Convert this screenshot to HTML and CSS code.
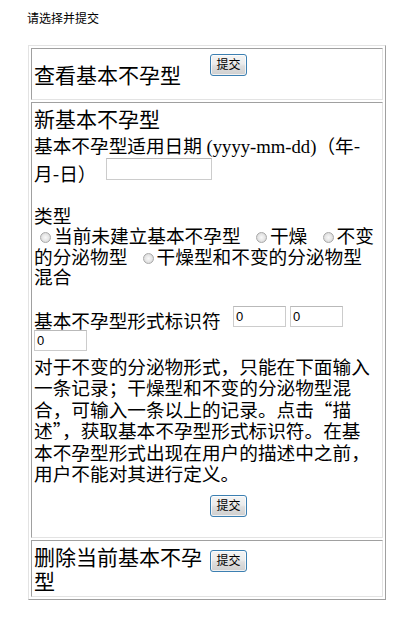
FILE: index.html
```html
<!DOCTYPE html>
<html lang="zh-CN">
<head>
<meta charset="utf-8">
<title>基本不孕型</title>
<link rel="stylesheet" href="styles.css">
</head>
<body>
<div class="page">
  <p class="caption">请选择并提交</p>
  <div class="panel">
    <form class="cell">
      <div class="row row-view">
        <span class="label">查看基本不孕型</span>
        <button type="button" class="btn">提交</button>
      </div>
    </form>
    <form class="cell cell-new">
      <div class="title">新基本不孕型</div>
      <div class="field field-date">基本不孕型适用日期<span class="latin">&nbsp;(yyyy-mm-dd)</span>（年-月-日）&ensp;<input class="txt txt-date" type="text"></div>
      <div class="group">
        <div>类型</div>
        <div class="choices"><label class="opt"><input type="radio" name="kind" class="radio">当前未建立基本不孕型</label>&ensp;<label class="opt"><input type="radio" name="kind" class="radio">干燥</label>&ensp;<label class="opt"><input type="radio" name="kind" class="radio">不变的分泌物型</label>&ensp;<label class="opt"><input type="radio" name="kind" class="radio">干燥型和不变的分泌物型混合</label></div>
      </div>
      <div class="field field-ids">基本不孕型形式标识符&ensp;<input class="txt txt-id" type="text" value="0"> <input class="txt txt-id" type="text" value="0"> <input class="txt txt-id" type="text" value="0"></div>
      <p class="note">对于不变的分泌物形式，只能在下面输入一条记录；干燥型和不变的分泌物型混合，可输入一条以上的记录。点击“描述”，获取基本不孕型形式标识符。在基本不孕型形式出现在用户的描述中之前，用户不能对其进行定义。</p>
      <div class="actions"><button type="button" class="btn">提交</button></div>
    </form>
    <form class="cell">
      <div class="row row-del">
        <span class="label">删除当前基本不孕型</span>
        <button type="button" class="btn">提交</button>
      </div>
    </form>
  </div>
</div>
</body>
</html>
```

FILE: styles.css
```css
* {
  box-sizing: border-box;
}

body {
  margin: 0;
  background: #ffffff;
  color: #000000;
  font-family: "Noto Sans CJK SC", sans-serif;
}

.page {
  padding: 10px 0 0 27px;
}

.caption {
  margin: 0;
  font-size: 12px;
  line-height: 16px;
}

.panel {
  width: 358px;
  margin: 19px 0 0 1px;
  padding: 2px;
  border: 1px solid;
  border-color: #e3e3e3 #a0a0a0 #a0a0a0 #e3e3e3;
  display: flex;
  flex-direction: column;
  gap: 2px;
}

.cell {
  margin: 0;
  padding: 0 6px 0 2px;
  border: 1px solid;
  border-color: #a0a0a0 #e3e3e3 #e3e3e3 #a0a0a0;
  font-size: 18.67px;
  line-height: 21.5px;
}

/* rows with a label column and a button column */
.row {
  display: flex;
  gap: 6px;
  align-items: flex-start;
}

.label {
  width: 170px;
  font-size: 21px;
  line-height: 24px;
}

.row-view {
  min-height: 50px;
}

.row-view .label {
  align-self: center;
}

.row-view .btn {
  margin-top: 5px;
}

.row-del {
  min-height: 55px;
}

.row-del .label {
  margin-top: 3px;
}

.row-del .btn {
  margin-top: 9px;
}

/* new type form */
.cell-new {
  padding-top: 2px;
}

.title {
  font-size: 21px;
  line-height: 26px;
}

.field-date {
  margin-top: 3px;
}

.latin {
  font-family: "Liberation Serif", serif;
}

.group {
  margin-top: 21px;
}

.choices {
  line-height: 20.5px;
}

.radio {
  appearance: none;
  -webkit-appearance: none;
  width: 11px;
  height: 11px;
  margin: 0 3px 0 6px;
  border: 1px solid #a9a9a9;
  border-radius: 50%;
  background: radial-gradient(circle at 50% 50%, #f8f8f8 0%, #e6e6e6 50%, #cccccc 100%);
  vertical-align: 0;
}

.field-ids {
  margin-top: 19px;
}

.note {
  margin: 0;
}

.txt {
  height: 22px;
  padding: 0 2px;
  border: 1px solid #cccccc;
  border-top-color: #b9b9b9;
  font-family: "Liberation Sans", sans-serif;
  font-size: 13px;
  color: #000000;
  background: #ffffff;
  vertical-align: 7px;
}

.txt-date {
  width: 106px;
}

.txt-id {
  width: 53px;
  height: 21px;
}

.field-ids .txt-id:first-of-type {
  margin-left: 3px;
}

.actions {
  padding: 7px 0 20px 176px;
}

.btn {
  width: 37px;
  height: 22px;
  padding: 0 0 3px;
  border: 1px solid #3c7fb1;
  border-radius: 3px;
  background: linear-gradient(#f4f4f4 0%, #ececec 45%, #dedede 55%, #cfcfcf 100%);
  box-shadow: inset 0 0 0 1px rgba(255, 255, 255, 0.7);
  font-family: "Noto Sans CJK SC", sans-serif;
  font-size: 12px;
  line-height: 14px;
  color: #000000;
  flex: none;
}
```
